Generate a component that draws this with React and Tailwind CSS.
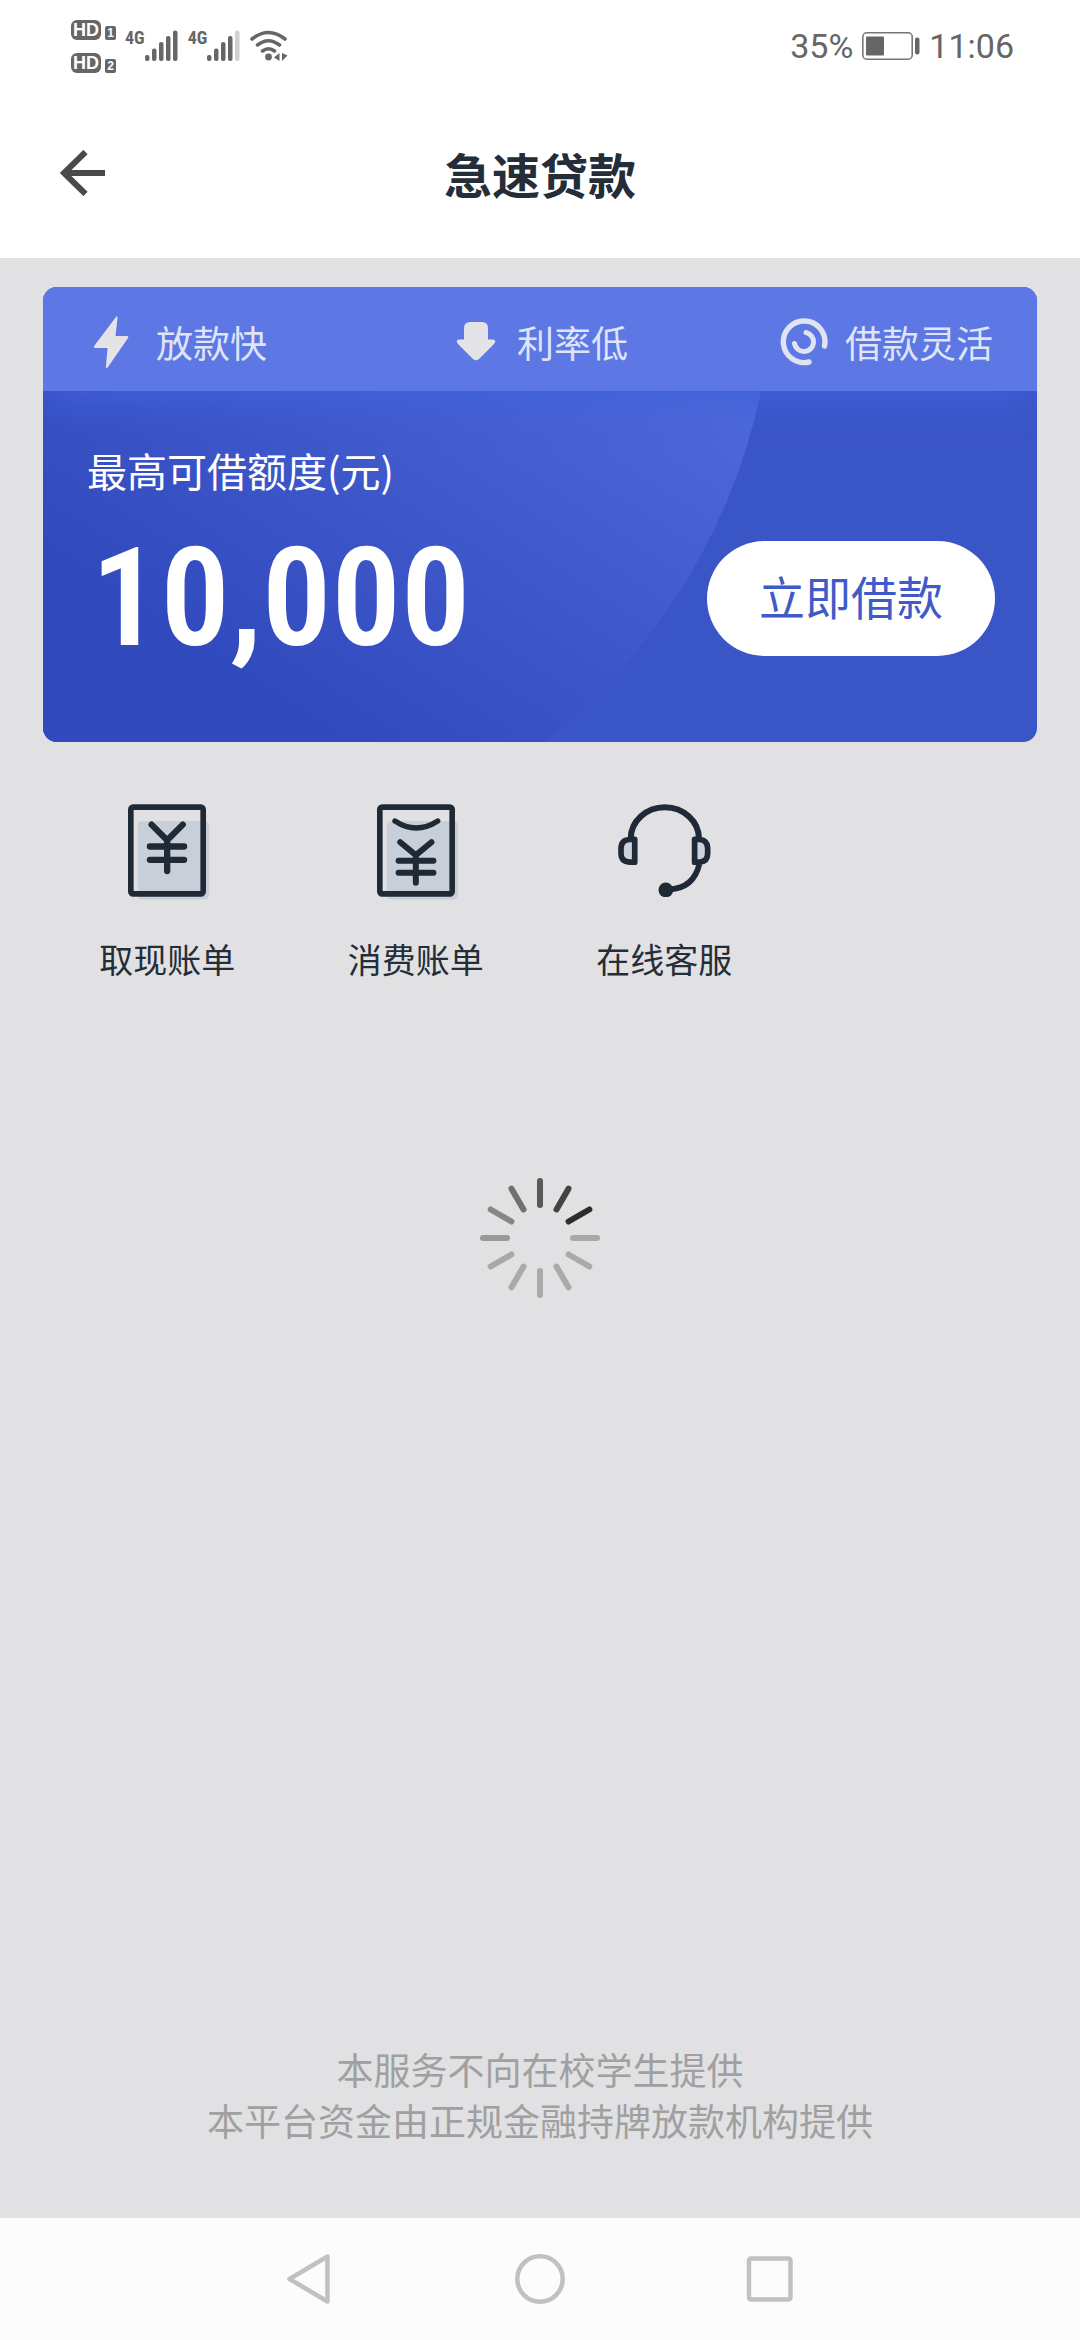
const features = [
  { label: "放款快", icon: BoltIcon, align: "justify-start" },
  { label: "利率低", icon: DownIcon, align: "justify-center" },
  { label: "借款灵活", icon: SwirlIcon, align: "justify-end" },
];

const shortcuts = [
  { label: "取现账单", icon: CashBillIcon },
  { label: "消费账单", icon: SpendBillIcon },
  { label: "在线客服", icon: HeadsetIcon },
];

// clockwise from the top
const spokes = [
  "#595959", "#434343", "#2d2d2d", "#a8a8a8", "#aaaaaa", "#aaaaaa",
  "#aaaaaa", "#aaaaaa", "#a8a8a8", "#999999", "#868686", "#717171",
];

function BoltIcon() {
  return (
    <svg viewBox="0 0 52 52" className="size-13" fill="#e4e4e6">
      <path d="M29 1Q31-1 30.500 2L28.500 20H40Q42 20 41 22L21 51Q18.500 54 19 50L20.500 32H8Q6 32 7.500 29.500Z" />
    </svg>
  );
}

function DownIcon() {
  return (
    <svg viewBox="0 0 48 48" className="size-12" fill="#e4e4e6">
      <path d="M18 4H30Q36 4 36 10V21.500H41Q45 22 42 26L27 41Q24 43.500 21 41L6 26Q3 22 7 21.500H12V10Q12 4 18 4Z" />
    </svg>
  );
}

function SwirlIcon() {
  return (
    <svg viewBox="0 0 48 48" className="size-12" fill="none" stroke="#e0e3f0" strokeLinecap="round">
      <path d="M44.500 28A20.800 20.800 0 1 0 29 44" strokeWidth="5.400" />
      <path d="M26 14.500A9.600 9.600 0 1 1 14.500 25.500" strokeWidth="5" />
    </svg>
  );
}

function BillFrame({ children }) {
  return (
    <svg viewBox="0 0 235 278" className="w-[78px] h-[93px] overflow-visible" fill="none" stroke="#1f2a36" strokeLinecap="round" strokeLinejoin="round">
      <rect x="29" y="50" width="215" height="237" rx="14" fill="#c8cfd9" stroke="none" />
      <rect x="8.500" y="8.500" width="218" height="261" rx="7" strokeWidth="17" />
      {children}
    </svg>
  );
}

function CashBillIcon() {
  return (
    <BillFrame>
      <path d="M71 61L118 108L165 61M118 108V201M66 127H169M66 167H169" strokeWidth="19" />
    </BillFrame>
  );
}

function SpendBillIcon() {
  return (
    <BillFrame>
      <path d="M54 50Q118 92 183 50" strokeWidth="16" />
      <path d="M70 114L117 153L164 114M117 153V236M65 170H170M65 206H170" strokeWidth="18" />
    </BillFrame>
  );
}

function HeadsetIcon() {
  return (
    <svg viewBox="0 0 278 278" className="size-[93px]" fill="none" stroke="#1f2a36" strokeLinejoin="round">
      <path d="M38 106V104A102 94 0 0 1 242 104V106" strokeWidth="18" />
      <path d="M50 106H34Q9 108 9 133V149Q9 172 34 174H50Z" fill="#ccd3dc" strokeWidth="17" />
      <path d="M229 106H244Q268 108 268 133V149Q268 172 244 174H229Z" fill="#ccd3dc" strokeWidth="17" />
      <path d="M243 180C232 226 204 252 155 255" strokeWidth="17" />
      <circle cx="143" cy="257" r="22" fill="#1f2a36" stroke="none" />
    </svg>
  );
}

function SimBadge({ number }) {
  return (
    <div className="flex items-end gap-1 text-white font-bold">
      <span className="w-[30px] h-5 rounded-md bg-[#666] text-[18px] leading-5 text-center">HD</span>
      <span className="w-[11px] h-[14px] rounded-xs bg-[#666] text-[12px] leading-[14px] text-center">{number}</span>
    </div>
  );
}

function Signal({ weak }) {
  return (
    <div className="flex items-start">
      <span className="font-['Roboto_Condensed','Roboto',sans-serif] font-bold text-[18px] leading-4">4G</span>
      <svg viewBox="0 0 34 32" className="w-[34px] h-8" fill="#666">
        <rect x="0" y="25" width="4.500" height="6" rx="2" />
        <rect x="7" y="18.500" width="4.500" height="12.500" rx="2" />
        <rect x="14" y="12" width="4.500" height="19" rx="2" />
        <rect x="21" y="6" width="4.500" height="25" rx="2" />
        <rect x="28" y="0.500" width="4.500" height="30.500" rx="2" fill={weak ? "#d0d0d0" : "#666"} />
      </svg>
    </div>
  );
}

function WifiIcon() {
  return (
    <svg viewBox="0 0 38 32" className="w-[38px] h-8" fill="none" stroke="#666" strokeWidth="3.600" strokeLinecap="round">
      <path d="M2 9Q18.500-4 35 9M7.500 15Q18.500 6.500 29.500 15M12.500 21Q18.500 16.500 24.500 21" />
      <circle cx="18.500" cy="27" r="3.400" fill="#666" stroke="none" />
      <path d="M29.500 23V31L24 27.500ZM32 23V31L37.500 25.500Z" fill="#666" stroke="none" />
    </svg>
  );
}

function StatusBar() {
  return (
    <div className="h-[92px] pl-[71px] pr-[66px] flex items-center justify-between text-[#666]">
      <div className="flex items-center gap-[9px]">
        <div className="flex flex-col gap-[13px] font-['Liberation_Sans']">
          <SimBadge number={1} />
          <SimBadge number={2} />
        </div>
        <Signal />
        <Signal weak />
        <WifiIcon />
      </div>
      <div className="flex items-center gap-[9px] font-[Roboto] text-[34px] leading-10">
        <span>35%</span>
        <svg viewBox="0 0 58 28" className="w-[58px] h-7" fill="#666">
          <rect x="0.800" y="0.800" width="49.400" height="26.400" rx="4" fill="none" stroke="#777" strokeWidth="1.600" />
          <rect x="4" y="4.500" width="18" height="19" rx="1" />
          <rect x="53" y="5.500" width="4.500" height="17" rx="2" />
        </svg>
        <span>11:06</span>
      </div>
    </div>
  );
}

function Header() {
  return (
    <header className="h-[166px] px-[60px] pb-1 grid grid-cols-[1fr_auto_1fr] items-center">
      <button aria-label="返回" className="justify-self-start">
        <svg viewBox="0 0 46 46" className="size-[46px]" fill="none" stroke="#4a4a4a" strokeWidth="6">
          <path d="M25.500 2L4 23L25.500 44M4 23H45" />
        </svg>
      </button>
      <h1 className="text-[48px] leading-[64px] font-bold text-[#242d38]">急速贷款</h1>
    </header>
  );
}

function LoanCard() {
  return (
    <section className="rounded-[14px] overflow-hidden bg-[#3a55c6] text-white">
      <div className="relative z-10 h-26 px-11 pt-1.5 flex items-center bg-[#5d77e4] shadow-[0_14px_36px_-6px_#4260dc]">
        {features.map(({ label, icon: Icon, align }) => (
          <div key={label} className={`flex-1 flex items-center gap-[17px] ${align}`}>
            <Icon />
            <span className="text-[37px] leading-[52px] text-[#dfe4f8]">{label}</span>
          </div>
        ))}
      </div>
      <div className="relative pt-[52px] pb-[86px] pl-11 pr-[42px]">
        <svg className="absolute inset-0 w-full h-full" aria-hidden="true">
          <defs>
            <linearGradient id="disc" gradientUnits="userSpaceOnUse" x1="190" y1="275" x2="459" y2="-131">
              <stop offset="0" stopColor="#314abe" />
              <stop offset="1" stopColor="#4d68d8" />
            </linearGradient>
          </defs>
          <circle cx="126" cy="-124" r="605" fill="url(#disc)" />
        </svg>
        <div className="relative">
          <p className="text-[40px] leading-[54px]">最高可借额度(元)</p>
          <div className="mt-11 flex items-center justify-between">
            <p className="pl-1 font-['Roboto_Condensed','Roboto',sans-serif] font-semibold text-[138px] leading-[115px]">10,000</p>
            <button className="px-[52px] pb-1.5 h-[115px] rounded-full bg-white text-[46px] text-[#3f5bc8]">立即借款</button>
          </div>
        </div>
      </div>
    </section>
  );
}

function Spinner() {
  return (
    <svg viewBox="-60 -60 120 120" className="size-30" role="status" aria-label="加载中">
      {spokes.map((color, i) => (
        <rect key={i} x="-3" y="-60" width="6" height="30" rx="3" fill={color} transform={`rotate(${i * 30})`} />
      ))}
    </svg>
  );
}

function SystemNav() {
  return (
    <nav className="h-[122px] bg-[#fcfcfc] flex items-center justify-center gap-[180px]">
      <button aria-label="后退">
        <svg viewBox="0 0 50 50" className="size-[50px]" fill="none" stroke="#c1c1c1" strokeWidth="4.500" strokeLinejoin="round">
          <path d="M42.500 2.500V47.500L4.500 25Z" />
        </svg>
      </button>
      <button aria-label="主屏幕">
        <svg viewBox="0 0 50 50" className="size-[50px]" fill="none" stroke="#c1c1c1" strokeWidth="4.500">
          <circle cx="25" cy="25" r="22.700" />
        </svg>
      </button>
      <button aria-label="最近任务">
        <svg viewBox="0 0 50 50" className="size-[50px]" fill="none" stroke="#c1c1c1" strokeWidth="4.500">
          <rect x="4" y="4.500" width="41.500" height="41" rx="2" />
        </svg>
      </button>
    </nav>
  );
}

export default function App() {
  return (
    <div className="min-h-screen flex flex-col bg-[#e1e1e3] font-['Noto_Sans_CJK_SC',sans-serif]">
      <div className="bg-white">
        <StatusBar />
        <Header />
      </div>
      <main className="flex-1 flex flex-col px-[43px] pt-[29px]">
        <LoanCard />
        <div className="mt-[62px] grid grid-cols-4">
          {shortcuts.map(({ label, icon: Icon }) => (
            <button key={label} className="flex flex-col items-center gap-[37px]">
              <Icon />
              <span className="text-[34px] leading-[50px] text-[#242d38]">{label}</span>
            </button>
          ))}
        </div>
        <div className="mt-[194px] flex justify-center">
          <Spinner />
        </div>
        <footer className="mt-auto pb-[72px] text-center text-[37px] leading-[51px] text-[#a0a0a0]">
          <p>本服务不向在校学生提供</p>
          <p>本平台资金由正规金融持牌放款机构提供</p>
        </footer>
      </main>
      <SystemNav />
    </div>
  );
}
